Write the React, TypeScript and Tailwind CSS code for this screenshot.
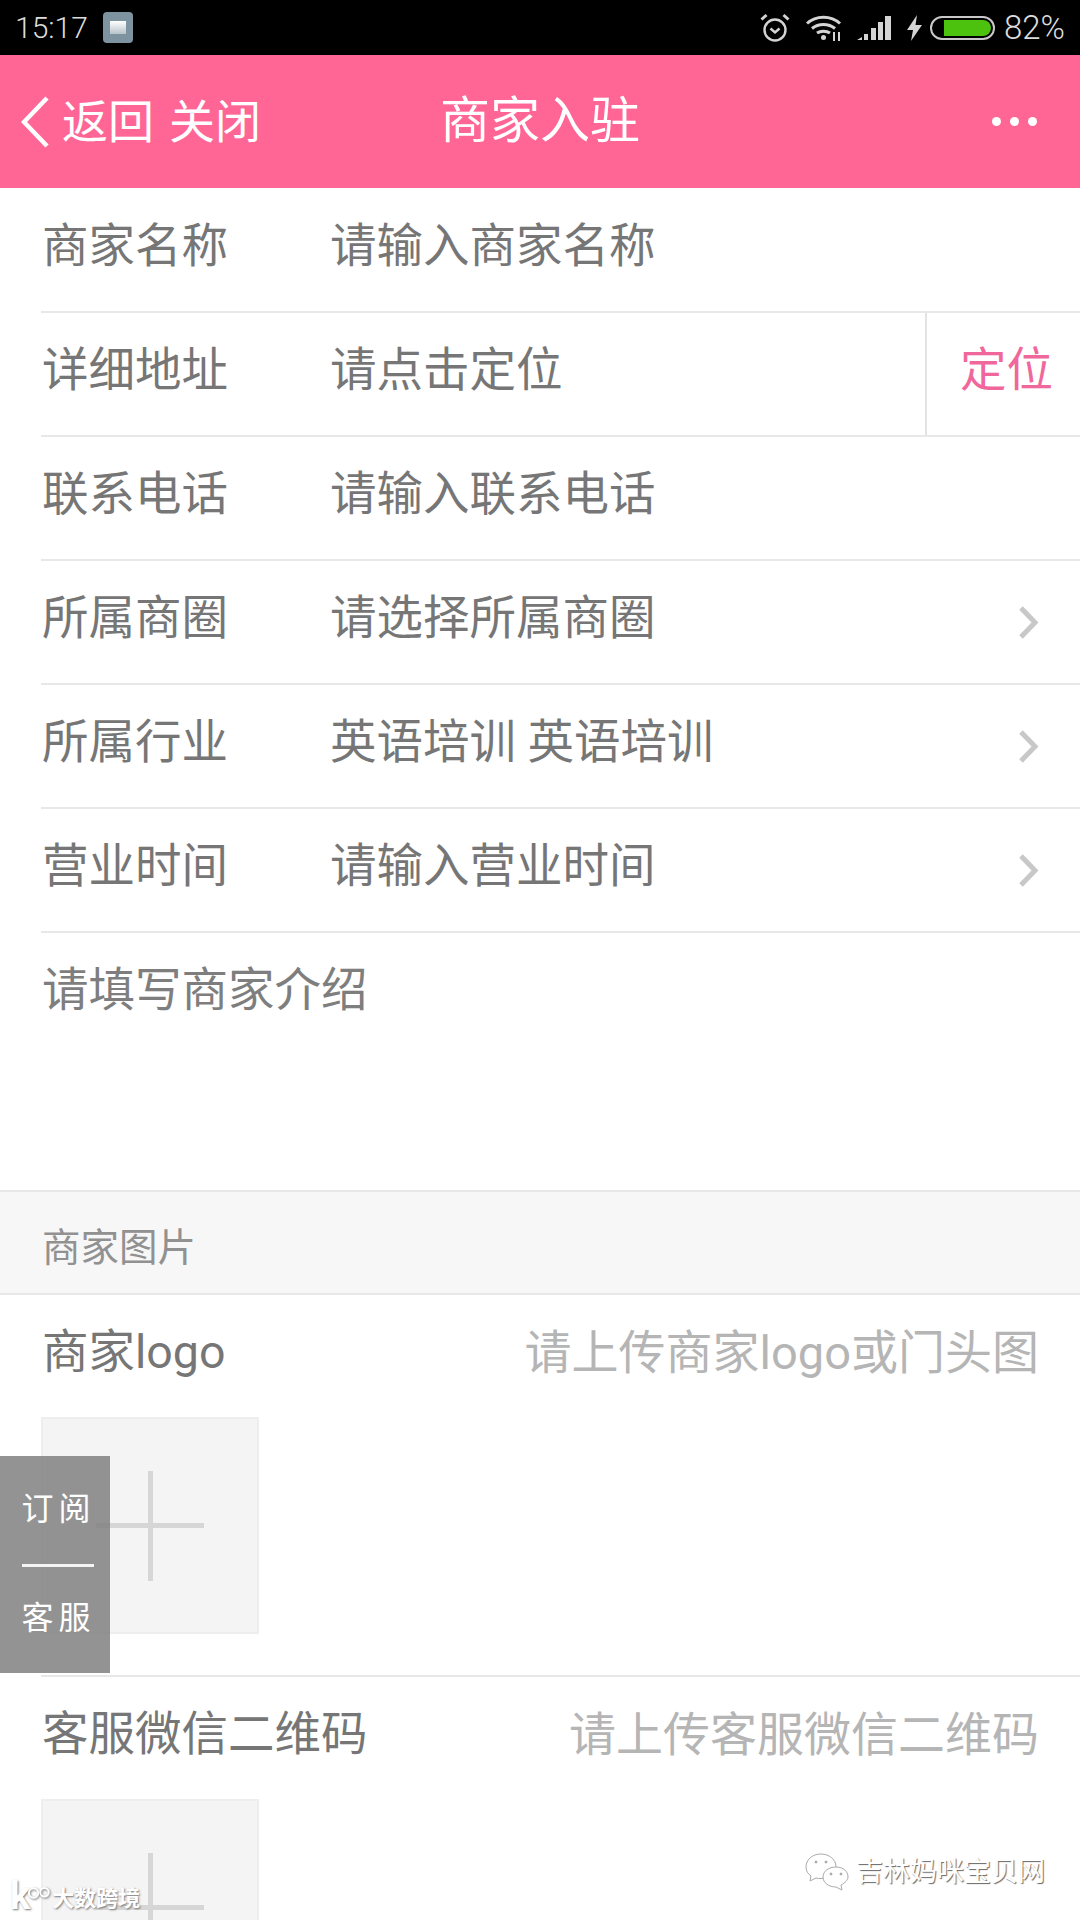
import React from 'react'

// 表单行：标签 + 占位文字
type Row = { label: string; value: string; arrow?: boolean; locate?: boolean }

const rows: Row[] = [
  { label: '商家名称', value: '请输入商家名称' },
  { label: '详细地址', value: '请点击定位', locate: true },
  { label: '联系电话', value: '请输入联系电话' },
  { label: '所属商圈', value: '请选择所属商圈', arrow: true },
  { label: '所属行业', value: '英语培训 英语培训', arrow: true },
  { label: '营业时间', value: '请输入营业时间', arrow: true },
]

function StatusBar() {
  return (
    <div className="h-[55px] bg-black flex items-center justify-between pl-[15px] pr-[15px] text-[30px] font-light text-[#dcdcdc] font-['Roboto',sans-serif]">
      <div className="flex items-center gap-[15px]">
        <span>15:17</span>
        <div className="w-[30px] h-[31px] rounded-[4px] bg-[#7d93a0] flex items-center justify-center">
          <div className="w-4 h-[13px] bg-gradient-to-b from-white to-[#b7c3ca]" />
        </div>
      </div>
      <div className="flex items-center">
        <svg width="30" height="30" viewBox="0 0 30 30" fill="none" stroke="#d4d4d4" strokeWidth="2.4">
          <circle cx="15" cy="17" r="10.5" />
          <path d="M10.5 15.5 15 19.5l4.5-4" />
          <path d="M1.5 6.5 6.5 2M28.5 6.5 23.5 2" strokeWidth="3" />
        </svg>
        <svg className="ml-4" width="36" height="26" viewBox="0 0 36 26" fill="none" stroke="#d4d4d4" strokeWidth="3">
          <path d="M1 8.5C10 0 25 0 34 8.5" />
          <path d="M6 13.5c6.500-5.500 16.500-5.500 23 0" />
          <path d="M11 18c3.500-2.500 9.500-2.500 13 0" />
          <circle cx="17.500" cy="22.500" r="2.500" fill="#d4d4d4" stroke="none" />
          <path d="M28 17v9M33 17v9" strokeWidth="2" />
        </svg>
        <svg className="ml-[15px]" width="34" height="24" viewBox="0 0 34 24" fill="#d4d4d4">
          <path d="M0 24l5-3v3zM7 18h4v6H7zM14 12h5v12h-5zM21 6h5v18h-5zM28 0h6v24h-6z" />
        </svg>
        <svg className="ml-4" width="15" height="26" viewBox="0 0 15 26" fill="#d4d4d4">
          <path d="M10 0 0 15h6l-2 11L15 10H8.500z" />
        </svg>
        <div className="ml-2 w-[65px] h-[24px] rounded-full border-2 border-[#c8c8c8] p-[2px] pl-[12px] flex">
          <div className="flex-1 rounded-r-full bg-[#4cc20f]" />
        </div>
        <span className="ml-[9px] text-[33px] leading-none">82%</span>
      </div>
    </div>
  )
}

function Header() {
  return (
    <div className="h-[133px] bg-[#ff6696] grid grid-cols-[1fr_auto_1fr] items-center text-white">
      <div className="flex items-center pl-[21px]">
        <svg width="28" height="52" viewBox="0 0 28 52" fill="none" stroke="white" strokeWidth="4.500">
          <path d="M26 2 3 26l23 24" />
        </svg>
        <span className="ml-[13px] text-[46px] leading-none">返回</span>
        <span className="ml-[15px] text-[46px] leading-none">关闭</span>
      </div>
      <div className="text-[50px] leading-none mb-[2px]">商家入驻</div>
      <div className="flex justify-end gap-[9px] pr-[43px]">
        <span className="size-[9px] rounded-full bg-white" />
        <span className="size-[9px] rounded-full bg-white" />
        <span className="size-[9px] rounded-full bg-white" />
      </div>
    </div>
  )
}

function FormRow({ label, value, arrow, locate }: Row) {
  return (
    <div className="ml-[41px] h-[124px] border-b-2 border-[#e8e8e8] flex items-stretch text-[46.5px] text-[#767676]">
      <div className="w-[289px] pl-[1px] pb-[6px] flex items-center">{label}</div>
      <div className="flex-1 pb-[6px] flex items-center">{value}</div>
      {arrow && (
        <div className="pr-[41px] flex items-center">
          <svg width="21" height="33" viewBox="0 0 21 33" fill="none" stroke="#c8c8c8" strokeWidth="5">
            <path d="M3 2l14 14.500L3 31" />
          </svg>
        </div>
      )}
      {locate && (
        <div className="w-[155px] border-l-2 border-[#e2e2e2] pl-[33px] pb-[6px] flex items-center text-[#f0679b]">定位</div>
      )}
    </div>
  )
}

// 上传区块：标题行 + 带加号的方框
function UploadBlock({ title, hint }: { title: string; hint: string }) {
  return (
    <div>
      <div className="h-[122px] pl-[42px] pr-[41px] pb-[6px] flex items-center justify-between text-[46.5px]">
        <span className="text-[#767676]">{title}</span>
        <span className="text-[47px] text-[#b5b5b5]">{hint}</span>
      </div>
      <div className="ml-[41px] w-[218px] h-[217px] bg-[#f4f4f4] border-2 border-[#eeeeee] relative flex items-center justify-center">
        <div className="w-[108px] h-[5px] bg-[#d6d6d6]" />
        <div className="absolute w-[5px] h-[110px] bg-[#d6d6d6]" />
      </div>
    </div>
  )
}

export default function App() {
  return (
    <div className="relative w-[1080px] h-[1920px] overflow-hidden bg-white font-['Roboto','Noto_Sans_CJK_SC',sans-serif]">
      <StatusBar />
      <Header />

      <div className="pt-[1px]">
        {rows.map((r) => (
          <FormRow key={r.label} {...r} />
        ))}
      </div>

      {/* 商家介绍 */}
      <div className="h-[257px] pl-[42px] pt-[23px] text-[46.5px] leading-[68px] text-[#7e7e7e]">请填写商家介绍</div>

      <div className="h-[105px] bg-[#f7f7f7] border-y-2 border-[#e8e8e8] pl-[42px] pt-[11px] flex items-center text-[38.5px] text-[#919191]">
        商家图片
      </div>

      <UploadBlock title="商家logo" hint="请上传商家logo或门头图" />
      <div className="ml-[41px] mt-[41px] border-b-2 border-[#e8e8e8]" />
      <UploadBlock title="客服微信二维码" hint="请上传客服微信二维码" />

      {/* 左侧悬浮按钮 */}
      <div className="absolute left-0 top-[1456px] w-[110px] h-[217px] bg-[#808080]/85 flex flex-col items-center text-white text-[32px] tracking-[5px]">
        <span className="mt-[30px] leading-[46px] pl-[7px]">订阅</span>
        <div className="w-[72px] h-[3px] bg-white/90 ml-[5px] mt-[32px]" />
        <span className="mt-[28px] leading-[46px] pl-[7px]">客服</span>
      </div>

      {/* 水印 */}
      <div className="absolute left-[10px] bottom-[5px] flex items-center text-white text-[22px] font-bold [text-shadow:1px_1px_2px_#777]">
        <span className="text-[38px] leading-none tracking-[-3px] -mt-[6px]">k</span>
        <svg className="-mt-[12px] drop-shadow-[1px_1px_1px_#777]" width="24" height="14" viewBox="0 0 30 18" fill="none" stroke="white" strokeWidth="2.500">
          <circle cx="8" cy="9" r="6" />
          <circle cx="22" cy="8" r="5.500" />
        </svg>
        <span className="ml-[1px] leading-none">大数跨境</span>
      </div>
      <div className="absolute left-[805px] bottom-[29px] flex items-center text-white text-[27px] [text-shadow:1px_1px_1px_#666]">
        <svg width="46" height="38" viewBox="0 0 46 38" fill="white" stroke="#aaa" strokeWidth="1">
          <path d="M16 1C7 1 1 7 1 14c0 4 2 7 5 9l-1 5 6-3c2 .5 3 .5 5 .5 8 0 15-5 15-12S24 1 16 1z" />
          <path d="M31 14c-7 0-13 4-13 10s6 10 13 10l6 3-1-5c4-2 7-5 7-8 0-6-5-10-12-10z" />
          <circle cx="11" cy="9" r="1" fill="#999" />
          <circle cx="21" cy="9" r="1" fill="#999" />
          <circle cx="26" cy="21" r="1" fill="#999" />
          <circle cx="36" cy="21" r="1" fill="#999" />
        </svg>
        <span className="ml-[5px] leading-none">吉林妈咪宝贝网</span>
      </div>
    </div>
  )
}
